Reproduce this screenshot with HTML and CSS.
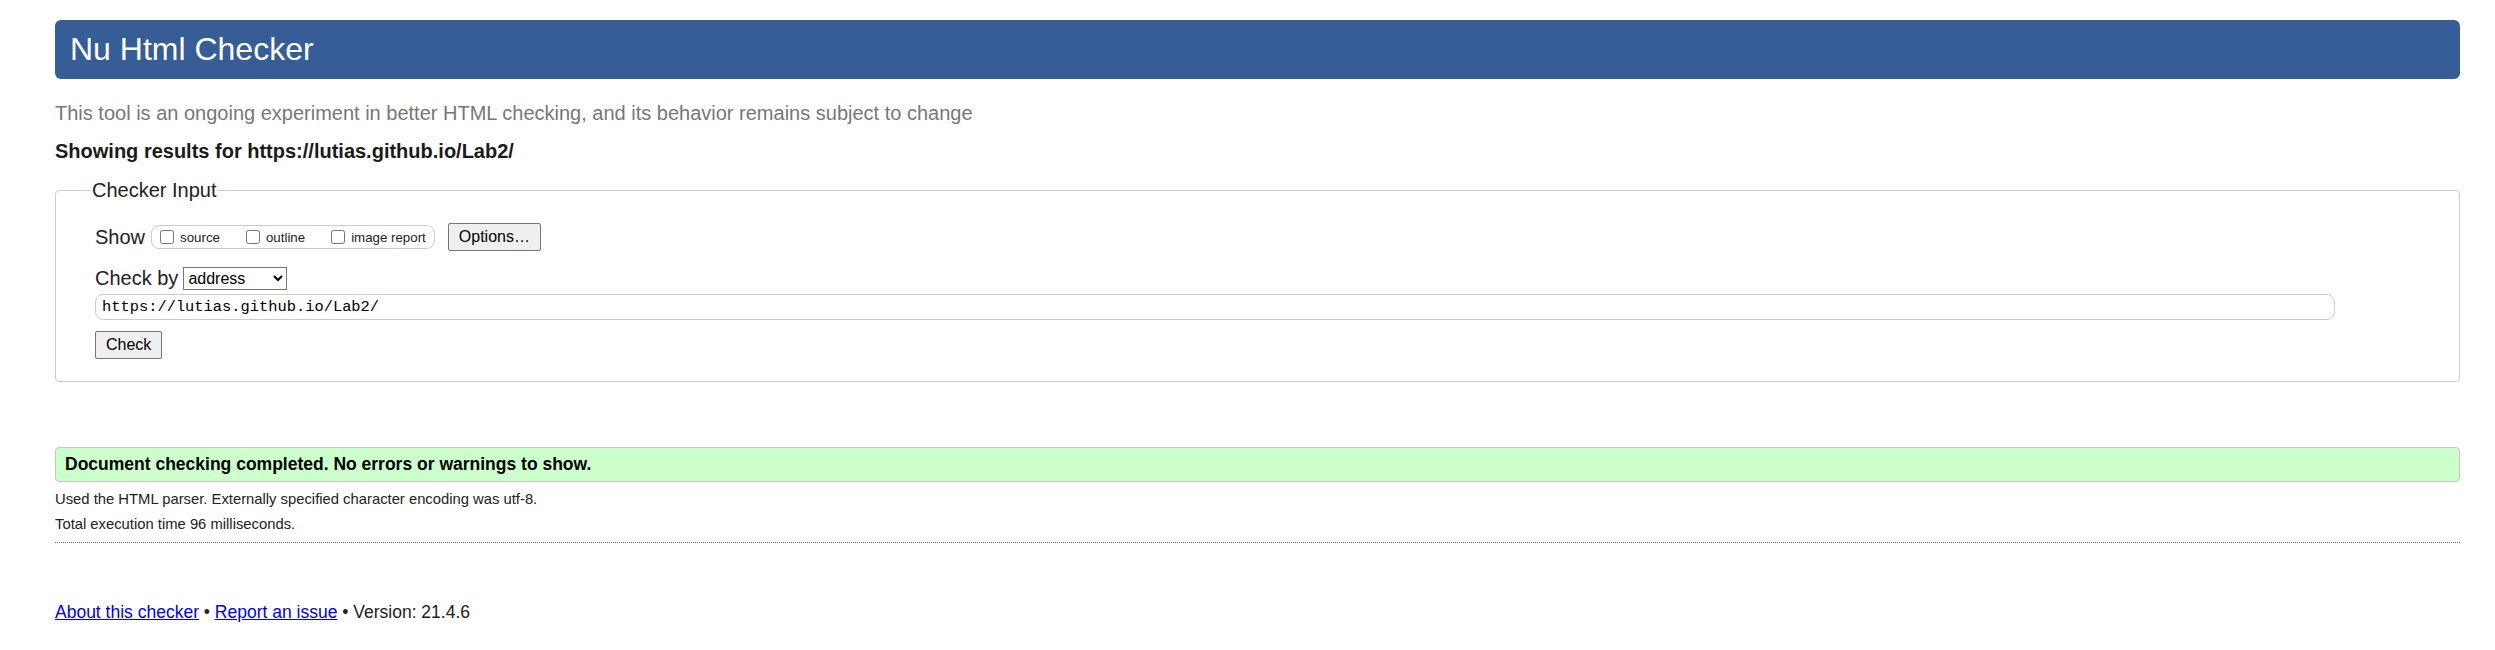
FILE: index.html
```html
<!DOCTYPE html>
<html lang="en">
<head>
<meta charset="utf-8">
<title>Nu Html Checker</title>
<link rel="stylesheet" href="styles.css">
</head>
<body>
<h1 class="title">Nu Html Checker</h1>
<p class="tagline">This tool is an ongoing experiment in better HTML checking, and its behavior remains subject to change</p>
<p class="showing">Showing results for https://lutias.github.io/Lab2/</p>
<form class="checker">
  <fieldset class="input-set">
    <legend class="legend">Checker Input</legend>
    <div class="row show-row">
      <span class="row-label">Show</span>
      <span class="showbox">
        <label class="opt"><input type="checkbox" class="cb"><span>source</span></label>
        <label class="opt"><input type="checkbox" class="cb"><span>outline</span></label>
        <label class="opt"><input type="checkbox" class="cb"><span>image report</span></label>
      </span>
      <button type="button" class="btn options">Options…</button>
    </div>
    <div class="row by-row">
      <span class="row-label">Check by</span>
      <select class="sel"><option>address</option></select>
    </div>
    <input class="url" type="text" value="https://lutias.github.io/Lab2/">
    <button type="button" class="btn check">Check</button>
  </fieldset>
</form>
<p class="success">Document checking completed. No errors or warnings to show.</p>
<p class="info first">Used the HTML parser. Externally specified character encoding was utf-8.</p>
<p class="info">Total execution time 96 milliseconds.</p>
<hr class="rule">
<p class="footer"><a href="#" class="link">About this checker</a> • <a href="#" class="link">Report an issue</a> • Version: 21.4.6</p>
</body>
</html>
```

FILE: styles.css
```css
html, body {
  background: #fff;
}
body {
  margin: 0;
  padding: 0 35px 0 55px;
  font-family: "Liberation Sans", Arial, sans-serif;
  color: #222;
}
.title {
  margin: 20px 0 0 0;
  height: 59px;
  line-height: 59px;
  padding: 0 15px;
  background: #365d95;
  color: #fff;
  font-size: 32px;
  font-weight: normal;
  border-radius: 6px;
}
.tagline {
  margin: 22px 0 0 0;
  font-size: 20px;
  line-height: 24px;
  color: #777;
}
.showing {
  margin: 14px 0 0 0;
  font-size: 20px;
  line-height: 24px;
  font-weight: bold;
  color: #1a1a1a;
}
.checker {
  margin: 15px 0 0 0;
}
.input-set {
  margin: 0;
  min-width: 0;
  border: 1px solid #ccc;
  border-radius: 4px;
  padding: 0 0 22px 39px;
}
.legend {
  padding: 0 1px;
  margin-left: -4px;
  font-size: 20px;
  line-height: 24px;
  color: #222;
}
.row {
  display: flex;
  align-items: center;
}
.show-row {
  margin-top: 21px;
  height: 28px;
}
.row-label {
  font-size: 20px;
  line-height: 24px;
  color: #222;
}
.showbox {
  display: inline-flex;
  align-items: center;
  box-sizing: border-box;
  height: 24px;
  margin-left: 6px;
  padding: 0 8px 0 7px;
  border: 1px solid #ccc;
  border-radius: 8px;
  gap: 25px;
}
.opt {
  display: inline-flex;
  align-items: center;
  font-size: 13.3px;
  color: #222;
}
.cb {
  width: 14px;
  height: 14px;
  margin: 0 6px 0 1px;
}
.btn {
  box-sizing: border-box;
  height: 28px;
  padding: 0 10px;
  font-family: "Liberation Sans", Arial, sans-serif;
  font-size: 16px;
  color: #000;
  background: #efefef;
  border: 1px solid #767676;
  border-radius: 2px;
}
.options {
  margin-left: 13px;
}
.by-row {
  margin-top: 15px;
  height: 24px;
}
.sel {
  box-sizing: border-box;
  width: 104px;
  height: 23px;
  margin-left: 5px;
  font-family: "Liberation Sans", Arial, sans-serif;
  font-size: 16px;
  color: #000;
  background: #fff;
  border: 1px solid #767676;
  border-radius: 0;
}
.url {
  display: block;
  box-sizing: border-box;
  margin: 4px 0 0 0;
  width: calc(100% - 124px);
  height: 26px;
  padding: 0 6px;
  font-family: "Liberation Mono", "DejaVu Sans Mono", monospace;
  font-size: 15.4px;
  color: #000;
  border: 1px solid #ccc;
  border-radius: 8px;
}
.check {
  display: block;
  margin-top: 11px;
}
.success {
  margin: 65px 0 0 0;
  height: 35px;
  box-sizing: border-box;
  line-height: 33px;
  padding: 0 9px;
  background: #ccffcc;
  border: 1px solid #c6c6c6;
  border-radius: 4px;
  font-size: 17.5px;
  font-weight: bold;
  color: #000;
}
.info {
  margin: 0;
  font-size: 14.8px;
  line-height: 25px;
  color: #222;
}
.info.first {
  margin-top: 5px;
}
.rule {
  margin: 5px 0 0 0;
  height: 0;
  border: 0;
  border-top: 1px dotted #666;
}
.footer {
  margin: 56px 0 0 0;
  font-size: 17.5px;
  line-height: 26px;
  color: #222;
}
.link {
  color: #0000ee;
}
```
